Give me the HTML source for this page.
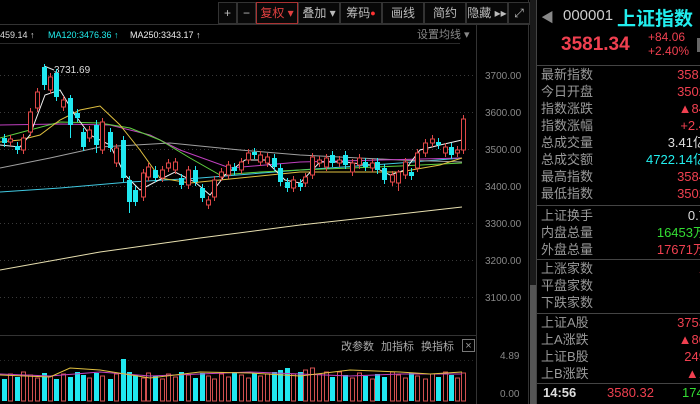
<!DOCTYPE html>
<html><head><meta charset="utf-8"><style>
*{margin:0;padding:0;box-sizing:border-box}
body{width:700px;height:404px;background:#000;overflow:hidden;font-family:"Liberation Sans","Noto Sans CJK SC",sans-serif;position:relative}
.tb{position:absolute;top:2px;height:22px;border:1px solid #333;color:#bbb;font-size:12px;line-height:20px;text-align:center;background:#080808}
.rp{position:absolute;left:537px;top:0;width:163px;height:404px;overflow:hidden}
.row{position:absolute;left:4px;font-size:13px;color:#999;height:17px;line-height:17px;width:159px}
.row span{position:absolute;right:-6px;text-align:right}
.sep{position:absolute;left:0;width:163px;height:1px;background:#444}
</style></head><body>
<svg id="c" width="700" height="404" style="position:absolute;left:0;top:0"></svg>
<div class="tb" style="left:218px;width:19px">+</div>
<div class="tb" style="left:237px;width:19px">−</div>
<div class="tb" style="left:256px;width:42px;border-color:#a33;color:#e04040">复权 ▾</div>
<div class="tb" style="left:298px;width:42px">叠加 ▾</div>
<div class="tb" style="left:340px;width:42px">筹码<span style="color:#f33;font-size:9px;vertical-align:top">●</span></div>
<div class="tb" style="left:382px;width:42px">画线</div>
<div class="tb" style="left:424px;width:42px">简约</div>
<div class="tb" style="left:466px;width:42px">隐藏 ▸▸</div>
<div class="tb" style="left:508px;width:22px">⤢</div>
<div class="rp">
<div style="position:absolute;left:4px;top:7px;color:#888;font-size:13px">◀</div>
<div style="position:absolute;left:26px;top:7px;color:#ccc;font-size:15px">000001</div>
<div style="position:absolute;left:80px;top:4px;color:#2ee;font-size:19px;font-weight:bold">上证指数</div>
<div style="position:absolute;left:24px;top:34px;color:#f04050;font-size:19px;font-weight:bold">3581.34</div>
<div style="position:absolute;left:111px;top:30px;color:#f04050;font-size:12px;line-height:14px">+84.06<br>+2.40%</div>
<div style="position:absolute;left:160px;top:38px;width:4px;height:14px;background:#666"></div>
<div class="sep" style="top:65px"></div>
<div class="row" style="top:66px">最新指数<span style="color:#f04050">3581</span></div>
<div class="row" style="top:83px">今日开盘<span style="color:#f04050">3502</span></div>
<div class="row" style="top:100px">指数涨跌<span style="color:#f04050">▲84</span></div>
<div class="row" style="top:117px">指数涨幅<span style="color:#f04050">+2.4</span></div>
<div class="row" style="top:134px">总成交量<span style="color:#ddd">3.41亿</span></div>
<div class="row" style="top:151px">总成交额<span style="color:#2ee">4722.14亿</span></div>
<div class="row" style="top:168px">最高指数<span style="color:#f04050">3584</span></div>
<div class="row" style="top:185px">最低指数<span style="color:#f04050">3502</span></div>
<div class="sep" style="top:205px"></div>
<div class="row" style="top:207px">上证换手<span style="color:#ddd">0.7</span></div>
<div class="row" style="top:224px">内盘总量<span style="color:#3d3">16453万</span></div>
<div class="row" style="top:241px">外盘总量<span style="color:#f04050">17671万</span></div>
<div class="sep" style="top:259px"></div>
<div class="row" style="top:260px">上涨家数<span style="color:#f04050">1</span></div>
<div class="row" style="top:277px">平盘家数</div>
<div class="row" style="top:294px">下跌家数</div>
<div class="sep" style="top:313px"></div>
<div class="row" style="top:314px">上证A股<span style="color:#f04050">3753</span></div>
<div class="row" style="top:331px">上A涨跌<span style="color:#f04050">▲80</span></div>
<div class="row" style="top:348px">上证B股<span style="color:#f04050">249</span></div>
<div class="row" style="top:365px">上B涨跌<span style="color:#f04050">▲1</span></div>
<div class="sep" style="top:383px"></div>
<div style="position:absolute;left:6px;top:385px;color:#ddd;font-size:13px;font-weight:bold">14:56</div>
<div style="position:absolute;left:70px;top:385px;color:#f04050;font-size:13px">3580.32</div>
<div style="position:absolute;left:145px;top:385px;color:#3d3;font-size:13px">1746</div>
</div>
<script>
var s='';
function L(x1,y1,x2,y2,c,w,d){s+='<line x1="'+x1+'" y1="'+y1+'" x2="'+x2+'" y2="'+y2+'" stroke="'+c+'" stroke-width="'+(w||1)+'"'+(d?' stroke-dasharray="'+d+'"':'')+'/>';}
function T(x,y,t,c,f,a){s+='<text x="'+x+'" y="'+y+'" fill="'+c+'" font-size="'+f+'" font-family="Liberation Sans,Noto Sans CJK SC,sans-serif"'+(a?' text-anchor="'+a+'"':'')+'>'+t+'</text>';}
L(0,24.5,530,24.5,'#333');L(0,43.5,460,43.5,'#2a2a2a');
L(476.5,24,476.5,404,'#333');L(528.5,0,528.5,404,'#333');
s+='<rect x="530" y="0" width="6" height="404" fill="#1a1a1a"/><rect x="530" y="285" width="6" height="119" fill="#555"/>';
L(536.5,0,536.5,404,'#444');
L(0,335.5,476,335.5,'#333');
[[75,'3700.00'],[112,'3600.00'],[149,'3500.00'],[186,'3400.00'],[223,'3300.00'],[260,'3200.00'],[297,'3100.00']].forEach(function(g){L(0,g[0]+.5,476,g[0]+.5,'#3a3a3a',1,'1,3');T(485,g[0]+4,g[1],'#888',10);});
L(0,360.5,476,360.5,'#2a2a2a',1,'1,3');
T(500,359,'4.89','#888',10);T(500,397,'0.00','#888',10);
T(0,38,'459.14 ↑','#ddd',9);T(48,38,'MA120:3476.36 ↑','#2ee',9);T(130,38,'MA250:3343.17 ↑','#eee',9);
T(417,38,'设置均线 ▾','#888',11);
T(341,350,'改参数','#aaa',11);T(381,350,'加指标','#aaa',11);T(421,350,'换指标','#aaa',11);
s+='<rect x="462.5" y="339.5" width="12" height="12" fill="none" stroke="#777"/>';T(468.5,349,'×','#999',11,'middle');
T(54,73,'3731.69','#ddd',10);L(44,66,54,70,'#ddd');
function P(pts,c){s+='<polyline fill="none" stroke="'+c+'" stroke-width="1" points="'+pts+'"/>';}
P('0,270 100,252 200,238 300,225 400,214 462,207','#e8e0b0');
P('0,192 60,188 130,182 200,178 300,170 400,163 462,158','#40c8e0');
P('0,168 50,158 100,147 170,143 240,150 300,155 400,160 462,162','#a0a0a0');
P('0,125 60,124 110,125 150,135 180,150 230,168 300,162 380,160 462,158','#c040c0');
P('0,138 30,130 60,122 100,123 130,128 160,140 190,158 220,175 260,172 300,170 400,166 462,163','#60d040');
P('0,142 20,140 40,135 60,120 80,110 100,106 120,125 140,150 160,178 190,183 220,180 260,176 300,172 360,172 400,172 440,165 462,158','#e0c040');
P('0,145 20,147 30,135 45,95 60,90 75,115 90,135 110,145 125,175 140,190 155,182 175,172 195,182 210,195 225,175 245,160 265,160 285,180 300,183 320,162 345,162 370,165 390,175 405,170 420,150 440,145 462,140','#f0f0f0');
var C=[[2,138,143,'c'],[8,139,142,'r'],[15,146,150,'c'],[21,138,150,'r'],[28,112,132,'r'],[35,92,108,'r'],[42,67,85,'c',64,90],[48,77,90,'r'],[54,73,97,'c'],[61,100,107,'r'],[68,98,125,'c',95,138],[75,113,118,'c'],[81,132,147,'c'],[87,130,138,'r'],[94,125,145,'c',120,153],[100,122,150,'r'],[108,132,148,'c'],[114,148,163,'r'],[121,140,178,'c'],[127,180,202,'c',176,213],[133,190,202,'c'],[141,173,197,'r'],[146,167,177,'r'],[153,170,178,'c'],[160,170,178,'r'],[166,163,168,'r'],[173,162,170,'r'],[179,178,185,'c'],[186,170,185,'r'],[193,170,182,'c'],[200,188,198,'c'],[206,200,205,'r',196,209],[212,180,197,'r'],[219,172,177,'r'],[226,165,175,'r'],[232,167,171,'c'],[239,162,170,'r'],[246,153,160,'r'],[252,152,155,'c'],[258,155,162,'r'],[265,157,163,'r'],[272,158,167,'c'],[278,168,182,'c'],[285,182,188,'c'],[291,180,188,'r'],[298,183,187,'c'],[303,177,183,'r'],[310,157,175,'r'],[317,160,163,'r'],[324,158,167,'r'],[330,155,163,'c'],[337,160,163,'r'],[343,155,165,'c'],[350,163,172,'r'],[357,158,165,'r'],[363,162,167,'c'],[370,163,168,'r'],[375,162,170,'c'],[382,168,180,'c'],[390,175,182,'r'],[396,172,183,'r',170,191],[403,162,175,'r'],[409,172,176,'c'],[415,153,168,'r'],[423,143,153,'r'],[430,139,143,'r'],[436,142,145,'c'],[443,147,153,'r'],[449,147,155,'c'],[455,150,153,'r'],[461,119,150,'r']];
C.forEach(function(k,i){var x=k[0],col=k[3]=='r'?'#e04848':'#20e8f0';var wt=k[4]||k[1]-4,wb=k[5]||k[2]+4;
L(x+2.5,wt,x+2.5,wb,col);
if(k[3]=='r')s+='<rect x="'+(x+.5)+'" y="'+k[1]+'" width="4" height="'+(k[2]-k[1])+'" fill="#000" stroke="'+col+'"/>';
else s+='<rect x="'+x+'" y="'+k[1]+'" width="5" height="'+Math.max(2,k[2]-k[1])+'" fill="'+col+'"/>';
var h=22+((i*37)%8);if(i==18)h=42;if(i>=40&&i<50)h=27+(i%4)*2;
if(k[3]=='r')s+='<rect x="'+(x+.5)+'" y="'+(401-h)+'" width="4" height="'+h+'" fill="none" stroke="#d05050"/>';
else s+='<rect x="'+x+'" y="'+(401-h)+'" width="5" height="'+h+'" fill="#20e8f0"/>';});
P('0,374 50,376 100,372 150,376 200,374 250,372 300,374 350,376 400,374 462,374','#c040c0');
P('0,375 50,377 70,368 100,370 150,378 200,372 250,373 300,376 350,370 400,372 430,374 462,372','#e0c040');
document.getElementById('c').innerHTML=s;
</script>
</body></html>
